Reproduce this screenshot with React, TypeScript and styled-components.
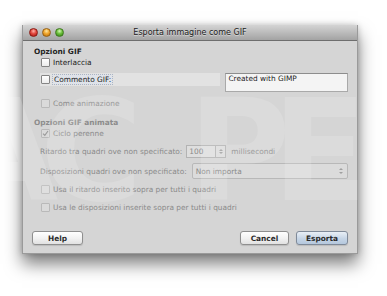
import React from 'react'
import styled, { createGlobalStyle, css } from 'styled-components'

const GlobalStyle = createGlobalStyle`
  html, body {
    margin: 0;
    padding: 0;
    background: #ffffff;
    width: 387px;
    height: 296px;
    overflow: hidden;
  }
  body {
    font-family: "DejaVu Sans", "Liberation Sans", sans-serif;
    font-size: 7.4px;
    color: #1e1e1e;
  }
`

const Page = styled.div`
  position: relative;
  width: 387px;
  height: 296px;
  padding: 25px 0 0 22px;
  box-sizing: border-box;
`

const Window = styled.div`
  width: 336px;
  background: #d5d5d5;
  border: 1px solid #9a9a9a;
  border-top: none;
  box-sizing: border-box;
  box-shadow: 0 10px 16px rgba(0, 0, 0, 0.5), 0 0 6px rgba(0, 0, 0, 0.2);
`

const TitleBar = styled.div`
  display: grid;
  grid-template-columns: 60px 1fr 60px;
  align-items: center;
  height: 15px;
  background: linear-gradient(#d4d4d4, #a3a3a3);
  border-bottom: 1px solid #6e6e6e;
  border-radius: 3px 3px 0 0;
`

const Lights = styled.div`
  display: flex;
  gap: 4px;
  padding-left: 6px;
`

const Light = styled.span<{ $color: 'red' | 'orange' | 'green' }>`
  width: 9px;
  height: 9px;
  border-radius: 50%;
  box-sizing: border-box;
  ${p =>
    p.$color === 'red'
      ? css`
          background: radial-gradient(circle at 50% 30%, #ffb2a8 0, #e2473e 45%, #a3140f 100%);
          border: 0.5px solid #8c1b14;
        `
      : p.$color === 'orange'
      ? css`
          background: radial-gradient(circle at 50% 30%, #ffe7a1 0, #f0a52c 45%, #b76a06 100%);
          border: 0.5px solid #966014;
        `
      : css`
          background: radial-gradient(circle at 50% 30%, #d6f7b8 0, #6cbf3c 45%, #2e7d10 100%);
          border: 0.5px solid #3f7a1f;
        `}
`

const Title = styled.div`
  text-align: center;
  font-size: 8px;
  color: #222;
  text-shadow: 0 1px 0 rgba(255, 255, 255, 0.45);
`

const Body = styled.div`
  display: flex;
  flex-direction: column;
  padding: 6px 9px 8px 11px;
`

const SectionTitle = styled.div<{ $mt?: number; $disabled?: boolean }>`
  height: 10px;
  line-height: 10px;
  font-weight: bold;
  margin-top: ${p => p.$mt ?? 0}px;
  color: ${p => (p.$disabled ? '#8c8c8c' : '#242424')};
`

const Row = styled.div<{ $mt?: number; $h?: number }>`
  display: flex;
  align-items: center;
  gap: 3px;
  height: ${p => p.$h ?? 10}px;
  margin-top: ${p => p.$mt ?? 0}px;
  margin-left: 6px;
`

const Box = styled.span<{ $disabled?: boolean }>`
  width: 9px;
  height: 9px;
  margin-left: 1px;
  box-sizing: border-box;
  border-radius: 1px;
  display: inline-flex;
  align-items: center;
  justify-content: center;
  flex-shrink: 0;
  ${p =>
    p.$disabled
      ? css`
          border: 1px solid #b9b9b9;
          background: #dadada;
        `
      : css`
          border: 1px solid #858585;
          background: linear-gradient(#ffffff, #ececec);
        `}
`

const Label = styled.span<{ $disabled?: boolean; $ml?: number }>`
  white-space: nowrap;
  margin-left: ${p => p.$ml ?? 0}px;
  color: ${p => (p.$disabled ? '#8a8a8a' : '#202020')};
`

const CommentRow = styled.div`
  display: flex;
  gap: 5px;
  margin-top: 6px;
  margin-left: 6px;
  align-items: flex-start;
`

const CommentToggle = styled.div`
  display: flex;
  align-items: center;
  gap: 3px;
  width: 181px;
  height: 13px;
  background: #e2e2e2;
`

const Focused = styled.span`
  padding: 0 1px;
  background: #dfe3ea;
  outline: 1px dotted #a9b4c6;
`

const TextField = styled.div`
  width: 123px;
  height: 19px;
  box-sizing: border-box;
  background: #f4f4f4;
  border: 1px solid #a9a9a9;
  border-top-color: #8d8d8d;
  padding: 0 2px;
  line-height: 10px;
  color: #1e1e1e;
`

const Spin = styled.div`
  display: flex;
  height: 13px;
  margin-left: 1px;
`

const SpinInput = styled.div`
  width: 30px;
  box-sizing: border-box;
  border: 1px solid #b3b3b3;
  background: #dedede;
  color: #8a8a8a;
  padding-left: 2px;
  line-height: 11px;
`

const Stepper = styled.div`
  width: 10px;
  box-sizing: border-box;
  border: 1px solid #b3b3b3;
  border-left: none;
  background: #dcdcdc;
  display: flex;
  flex-direction: column;
  align-items: center;
  justify-content: center;
  gap: 1px;
`

const Arrow = styled.span<{ $down?: boolean }>`
  width: 0;
  height: 0;
  border-left: 2px solid transparent;
  border-right: 2px solid transparent;
  ${p =>
    p.$down
      ? css`border-top: 2px solid #a0a0a0;`
      : css`border-bottom: 2px solid #a0a0a0;`}
`

const Select = styled.div`
  display: flex;
  align-items: center;
  justify-content: space-between;
  width: 159px;
  height: 16px;
  box-sizing: border-box;
  margin-left: 2px;
  border: 1px solid #b8b8b8;
  border-radius: 2px;
  background: #dbdbdb;
  color: #8a8a8a;
  padding: 0 4px 0 3px;
`

const SelectArrows = styled.div`
  display: flex;
  flex-direction: column;
  gap: 2px;
`

const Buttons = styled.div`
  display: flex;
  gap: 7px;
  margin-top: 19px;
  margin-left: -2px;
`

const Spacer = styled.div`
  flex: 1;
`

const Button = styled.div<{ $w: number; $default?: boolean }>`
  width: ${p => p.$w}px;
  height: 14px;
  box-sizing: border-box;
  border: 1px solid #8f8f8f;
  border-radius: 3px;
  display: flex;
  align-items: center;
  justify-content: center;
  font-weight: bold;
  font-size: 7.4px;
  color: #2a2a2a;
  box-shadow: 0 1px 1px rgba(0, 0, 0, 0.12);
  background: ${p =>
    p.$default
      ? 'linear-gradient(#e9eff6, #c6d5e6 55%, #b5c8dd)'
      : 'linear-gradient(#ffffff, #f1f1f1 55%, #e1e1e1)'};
  border-color: ${p => (p.$default ? '#7f8a99' : '#8f8f8f')};
`

const Watermark = styled.svg`
  position: absolute;
  left: 0;
  top: 0;
  pointer-events: none;
`

function Check({ disabled, checked }: { disabled?: boolean; checked?: boolean }) {
  return (
    <Box $disabled={disabled}>
      {checked && (
        <svg width="7" height="7" viewBox="0 0 7 7">
          <path d="M1 3.6 L2.8 5.4 L6 1" fill="none" stroke={disabled ? '#9a9a9a' : '#222'} strokeWidth="1.1" />
        </svg>
      )}
    </Box>
  )
}

export default function App() {
  return (
    <Page>
      <GlobalStyle />
      <Window>
        <TitleBar>
          <Lights>
            <Light $color="red" />
            <Light $color="orange" />
            <Light $color="green" />
          </Lights>
          <Title>Esporta immagine come GIF</Title>
          <div />
        </TitleBar>
        <Body>
          <SectionTitle>Opzioni GIF</SectionTitle>
          <Row>
            <Check />
            <Label>Interlaccia</Label>
          </Row>
          <CommentRow>
            <CommentToggle>
              <Check />
              <Focused>Commento GIF:</Focused>
            </CommentToggle>
            <TextField>Created with GIMP</TextField>
          </CommentRow>
          <Row $mt={6}>
            <Check disabled />
            <Label $disabled>Come animazione</Label>
          </Row>
          <SectionTitle $mt={10} $disabled>Opzioni GIF animata</SectionTitle>
          <Row>
            <Check disabled checked />
            <Label $disabled>Ciclo perenne</Label>
          </Row>
          <Row $mt={7} $h={13}>
            <Label $disabled>Ritardo tra quadri ove non specificato:</Label>
            <Spin>
              <SpinInput>100</SpinInput>
              <Stepper>
                <Arrow />
                <Arrow $down />
              </Stepper>
            </Spin>
            <Label $disabled $ml={2}>millisecondi</Label>
          </Row>
          <Row $mt={5} $h={16}>
            <Label $disabled>Disposizioni quadri ove non specificato:</Label>
            <Select>
              <span>Non importa</span>
              <SelectArrows>
                <Arrow />
                <Arrow $down />
              </SelectArrows>
            </Select>
          </Row>
          <Row $mt={5}>
            <Check disabled />
            <Label $disabled>Usa il ritardo inserito sopra per tutti i quadri</Label>
          </Row>
          <Row $mt={8}>
            <Check disabled />
            <Label $disabled>Usa le disposizioni inserite sopra per tutti i quadri</Label>
          </Row>
          <Buttons>
            <Button $w={51}>Help</Button>
            <Spacer />
            <Button $w={49}>Cancel</Button>
            <Button $w={52} $default>Esporta</Button>
          </Buttons>
        </Body>
      </Window>
      <Watermark width="387" height="296" viewBox="0 0 387 296">
        <g
          fontFamily="DejaVu Sans, sans-serif"
          fontWeight="bold"
          fontSize="140"
          fill="#ffffff"
          fillOpacity="0.15"
        >
          <text x="-50" y="200">A</text>
          <text x="40" y="200">C</text>
          <text x="188" y="200">P</text>
          <text x="272" y="200">E</text>
        </g>
      </Watermark>
    </Page>
  )
}
